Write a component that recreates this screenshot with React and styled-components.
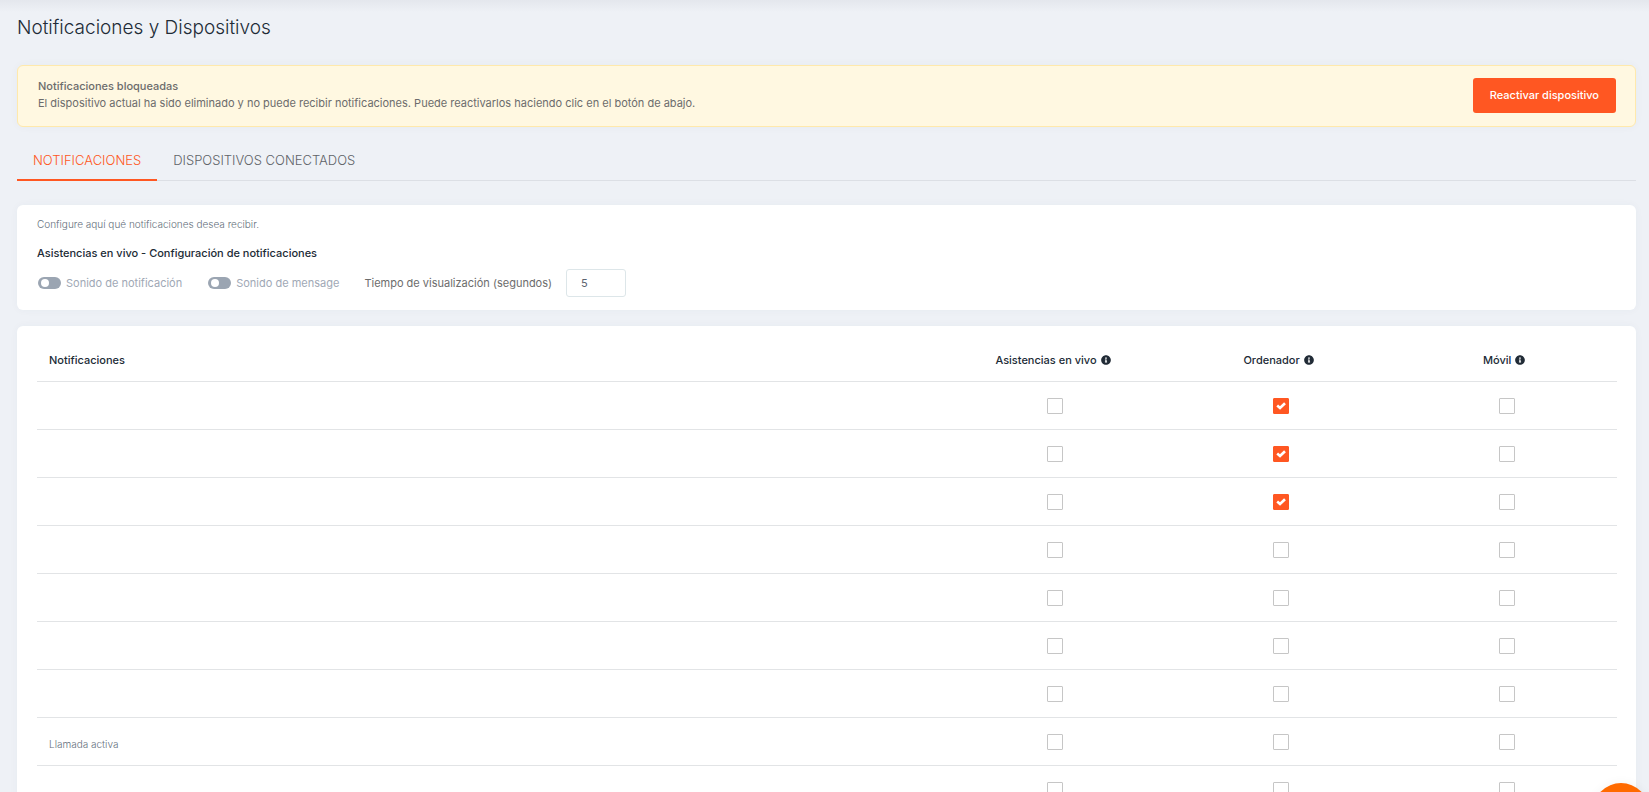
import React, { useState } from "react";
import styled, { createGlobalStyle } from "styled-components";
import { FaCheck, FaInfoCircle } from "react-icons/fa";

const GlobalStyle = createGlobalStyle`
  *, *::before, *::after { box-sizing: border-box; }
  html { scrollbar-width: none; background: #eef1f6; }
  body {
    margin: 0;
    color: #6c6c6c;
    font-family: Inter, "Liberation Sans", sans-serif;
    font-size: 12px;
    line-height: 18px;
  }
`;

const Page = styled.main`
  padding: 12px 13px 40px 17px;
  background: linear-gradient(#e4e7ed, #eef1f6 12px);
`;

const Title = styled.h1`
  margin: 0 0 21px;
  color: #212b36;
  font-size: 19px;
  font-weight: 300;
  line-height: 32px;
`;

const Alert = styled.section`
  display: flex;
  align-items: flex-start;
  justify-content: space-between;
  padding: 12px 19px 13px 20px;
  border: 1px solid #ffe9ac;
  border-radius: 6px;
  background: #fff8e1;
  box-shadow: 0 0 8px rgba(60, 80, 110, 0.04);
`;

const AlertTitle = styled.h2`
  margin: 0;
  font-size: 11px;
  font-weight: 500;
  line-height: 17px;
`;

const AlertText = styled.p`
  margin: 0;
  font-size: 11px;
  line-height: 17px;
`;

const PrimaryButton = styled.button`
  height: 35px;
  padding: 0 17px;
  border: 0;
  border-radius: 3px;
  background: #ff5722;
  color: #fff;
  font: 500 11px/17px Inter, "Liberation Sans", sans-serif;
`;

const Tabs = styled.nav`
  display: flex;
  margin: 13px 0 24px;
  border-bottom: 1px solid #dcdfe5;
`;

const Tab = styled.a`
  margin-bottom: -1px;
  padding: 10px 16px 9px;
  border-bottom: 2px solid ${(p) => (p.$active ? "#ff5722" : "transparent")};
  color: ${(p) => (p.$active ? "#ff5722" : "#606368")};
  font-size: 13px;
  font-weight: 300;
  line-height: 20px;
  text-decoration: none;
`;

const Card = styled.section`
  padding: ${(p) => (p.$table ? "14px 19px 20px 20px" : "10px 20px 13px")};
  border-radius: 6px;
  background: #fff;
  box-shadow: 0 0 8px rgba(60, 80, 110, 0.04);

  & + & { margin-top: 16px; }
`;

const Hint = styled.p`
  margin: 0 0 10px;
  color: #65707c;
  font-size: 10px;
  font-weight: 300;
`;

const SectionTitle = styled.h2`
  margin: 0 0 6px;
  color: #212b36;
  font-size: 11px;
  font-weight: 500;
  line-height: 20px;
`;

const Settings = styled.div`
  display: flex;
  align-items: center;
  gap: 25px;
  font-size: 11px;
`;

const SwitchLabel = styled.label`
  display: flex;
  align-items: center;
  gap: 5px;
  padding-left: 1px;
  color: #a0a8b5;
`;

const Switch = styled.input`
  appearance: none;
  width: 23px;
  height: 12px;
  margin: 0;
  padding: 2px 3px;
  border-radius: 6px;
  background: ${(p) => (p.checked ? "#ff5722" : "#9ba5b2")};

  &::before {
    content: "";
    display: block;
    width: 8px;
    height: 8px;
    margin-left: ${(p) => (p.checked ? "auto" : "0")};
    border-radius: 50%;
    background: #fff;
  }
`;

const SecondsLabel = styled.label`
  display: flex;
  align-items: center;
  gap: 14px;
`;

const SecondsInput = styled.input`
  width: 60px;
  height: 28px;
  padding: 0 14px;
  border: 1px solid #dde6e9;
  border-radius: 3px;
  color: #5c6370;
  font: 400 11px/18px Inter, "Liberation Sans", sans-serif;
`;

const Table = styled.table`
  width: 100%;
  table-layout: fixed;
  border-collapse: collapse;
`;

const HeadCell = styled.th`
  width: ${(p) => (p.$wide ? "auto" : "14.28%")};
  height: 41px;
  padding: 0 12px;
  border-bottom: 1px solid #e2e4e6;
  color: #212b36;
  font-size: 11px;
  font-weight: 500;
  text-align: ${(p) => (p.$wide ? "left" : "center")};
`;

const InfoIcon = styled(FaInfoCircle)`
  width: 10px;
  height: 10px;
  margin-left: 4px;
  vertical-align: -1px;
`;

const NameCell = styled.td`
  height: 48px;
  padding: 6px 12px 0;
  border-bottom: 1px solid #e2e4e6;
  color: #65707c;
  font-size: 10px;
  font-weight: 300;
`;

const CheckCell = styled.td`
  padding: 1px 0 0 5px;
  border-bottom: 1px solid #e2e4e6;
`;

const CheckWrap = styled.label`
  display: grid;
  place-items: center;
  width: 16px;
  height: 16px;
  margin: 0 auto;

  & > * { grid-area: 1 / 1; }
`;

const Checkbox = styled.input`
  appearance: none;
  width: 16px;
  height: 16px;
  margin: 0;
  border: 1px solid ${(p) => (p.checked ? "#ff5722" : "#c6c6c6")};
  border-radius: 1px;
  background: ${(p) => (p.checked ? "#ff5722" : "#fff")};
`;

const CheckMark = styled.svg`
  width: 10px;
  height: 8px;
  fill: none;
  stroke: #fff;
  stroke-width: 2.6;
  pointer-events: none;
`;

const FloatingButton = styled.button`
  position: fixed;
  right: 0;
  bottom: -47px;
  width: 56px;
  height: 56px;
  border: 0;
  border-radius: 50%;
  background: #ff6a00;
  box-shadow: 0 1px 12px rgba(0, 0, 0, 0.06);
`;

const columns = ["Asistencias en vivo", "Ordenador", "Móvil"];
const names = ["", "", "", "", "", "", "", "Llamada activa", ""];

function CheckBoxField({ label, initial }) {
  const [on, setOn] = useState(initial);
  return (
    <CheckWrap>
      <Checkbox type="checkbox" aria-label={label} checked={on} onChange={() => setOn(!on)} />
      {on && (
        <CheckMark viewBox="0 0 10 8" aria-hidden="true">
          <path d="M1.2 3.6 L4 6 L9 1.2" />
        </CheckMark>
      )}
    </CheckWrap>
  );
}

function SwitchField({ label }) {
  const [on, setOn] = useState(false);
  return (
    <SwitchLabel>
      <Switch type="checkbox" role="switch" checked={on} onChange={() => setOn(!on)} />
      {label}
    </SwitchLabel>
  );
}

export default function App() {
  return (
    <>
      <GlobalStyle />
      <Page>
        <Title>Notificaciones y Dispositivos</Title>
        <Alert>
          <div>
            <AlertTitle>Notificaciones bloqueadas</AlertTitle>
            <AlertText>
              El dispositivo actual ha sido eliminado y no puede recibir notificaciones. Puede
              reactivarlos haciendo clic en el botón de abajo.
            </AlertText>
          </div>
          <PrimaryButton type="button">Reactivar dispositivo</PrimaryButton>
        </Alert>
        <Tabs>
          <Tab href="#notificaciones" $active>NOTIFICACIONES</Tab>
          <Tab href="#dispositivos">DISPOSITIVOS CONECTADOS</Tab>
        </Tabs>
        <Card>
          <Hint>Configure aquí qué notificaciones desea recibir.</Hint>
          <SectionTitle>Asistencias en vivo - Configuración de notificaciones</SectionTitle>
          <Settings>
            <SwitchField label="Sonido de notificación" />
            <SwitchField label="Sonido de mensage" />
            <SecondsLabel>
              Tiempo de visualización (segundos)
              <SecondsInput type="text" inputMode="numeric" defaultValue="5" />
            </SecondsLabel>
          </Settings>
        </Card>
        <Card $table>
          <Table>
            <thead>
              <tr>
                <HeadCell $wide scope="col">Notificaciones</HeadCell>
                {columns.map((c) => (
                  <HeadCell key={c} scope="col">
                    {c}
                    <InfoIcon />
                  </HeadCell>
                ))}
              </tr>
            </thead>
            <tbody>
              {names.map((name, row) => (
                <tr key={row}>
                  <NameCell>{name}</NameCell>
                  {columns.map((c, col) => (
                    <CheckCell key={c}>
                      <CheckBoxField label={c} initial={col === 1 && row < 3} />
                    </CheckCell>
                  ))}
                </tr>
              ))}
            </tbody>
          </Table>
        </Card>
      </Page>
      <FloatingButton type="button" aria-label="Ayuda" />
    </>
  );
}
